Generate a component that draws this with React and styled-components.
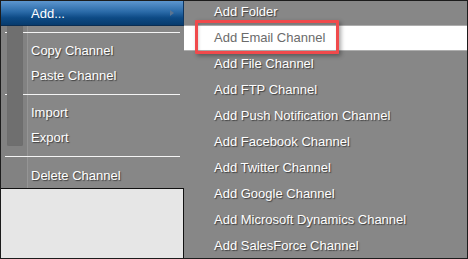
import React from "react";
import styled, { createGlobalStyle } from "styled-components";

const Global = createGlobalStyle`
  html, body { margin: 0; padding: 0; }
  body { font-family: "Liberation Sans", Arial, sans-serif; }
`;

const Frame = styled.div`
  box-sizing: border-box;
  width: 468px;
  height: 259px;
  border: 1px solid #1c1c1c;
  background: #878787;
  display: flex;
  overflow: hidden;
`;

const LeftColumn = styled.div`
  width: 183px;
  flex: none;
  display: flex;
  flex-direction: column;
`;

const MainMenu = styled.div`
  position: relative;
  display: flex;
  flex-direction: column;
  background: linear-gradient(to right, #828282 0, #828282 26px, #959595 26px, #959595 27px, #878787 27px);
`;

const GutterStrip = styled.div`
  position: absolute;
  left: 6px;
  top: 25px;
  width: 16px;
  height: 120px;
  background: #6f6f6f;
  border-radius: 0 0 2px 2px;
  box-shadow: inset 0 0 1px #646464;
`;

const Item = styled.div`
  position: relative;
  height: ${(p) => p.$h || 25}px;
  display: flex;
  align-items: center;
  padding-left: ${(p) => p.$indent}px;
  font-size: 13px;
  color: ${(p) => (p.$muted ? "#6b6b6b" : "#ffffff")};
  text-shadow: ${(p) => (p.$muted ? "none" : "1px 1px 1px rgba(40,40,40,0.75)")};
  white-space: nowrap;
`;

const ActiveItem = styled(Item)`
  background: linear-gradient(to bottom, #5d96cf 0%, #2a6aa8 45%, #0d4a85 70%, #073b6d 100%);
  border-right: 1px solid #0d3560;
  border-bottom: 1px solid #0a2d52;
  box-sizing: border-box;
  text-shadow: none;
`;

const Arrow = styled.span`
  position: absolute;
  right: 9px;
  top: 9px;
  width: 0;
  height: 0;
  border-top: 3px solid transparent;
  border-bottom: 3px solid transparent;
  border-left: 4px solid #5a7491;
`;

const Separator = styled.div`
  padding: 6px 4px 5px 4px;
  &::after {
    content: "";
    display: block;
    height: 1px;
    background: #f4f4f4;
  }
`;

const EmptyBox = styled.div`
  flex: 1;
  background: #e6e6e6;
  border-top: 1px solid #111;
  border-right: 1px solid #111;
`;

const SubMenu = styled.div`
  flex: 1;
  display: flex;
  flex-direction: column;
  margin-top: -2px;
`;

const HighlightRow = styled(Item)`
  box-sizing: border-box;
  background: #ffffff;
  border-top: 1px solid #adadad;
  border-bottom: 1px solid #adadad;
`;

const Callout = styled.div`
  position: absolute;
  left: 11px;
  top: -6px;
  width: 144px;
  height: 34px;
  box-sizing: border-box;
  border: 3px solid #f04a4c;
  border-radius: 1px;
  box-shadow: 2px 2px 4px rgba(0, 0, 0, 0.35), inset 1px 1px 3px rgba(0, 0, 0, 0.15);
  pointer-events: none;
`;

const subItems = [
  "Add File Channel",
  "Add FTP Channel",
  "Add Push Notification Channel",
  "Add Facebook Channel",
  "Add Twitter Channel",
  "Add Google Channel",
  "Add Microsoft Dynamics Channel",
  "Add SalesForce Channel",
];

export default function App() {
  return (
    <>
      <Global />
      <Frame>
        <LeftColumn>
          <MainMenu>
            <GutterStrip />
            <ActiveItem $indent={30} $h={25}>
              Add...
              <Arrow />
            </ActiveItem>
            <Separator />
            <Item $indent={30}>Copy Channel</Item>
            <Item $indent={30}>Paste Channel</Item>
            <Separator />
            <Item $indent={30}>Import</Item>
            <Item $indent={30}>Export</Item>
            <Separator />
            <Item $indent={30} $h={26}>Delete Channel</Item>
          </MainMenu>
          <EmptyBox />
        </LeftColumn>
        <SubMenu>
          <Item $indent={30} $h={26}>Add Folder</Item>
          <HighlightRow $indent={30} $h={26} $muted>
            Add Email Channel
            <Callout />
          </HighlightRow>
          {subItems.map((t) => (
            <Item key={t} $indent={30} $h={26}>
              {t}
            </Item>
          ))}
        </SubMenu>
      </Frame>
    </>
  );
}
